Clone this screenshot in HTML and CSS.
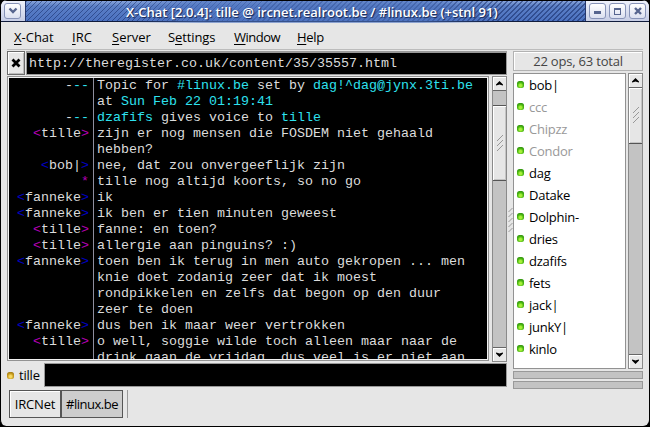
FILE: index.html
```
<!DOCTYPE html>
<html lang="en">
<head>
<meta charset="utf-8">
<title>X-Chat</title>
<link rel="stylesheet" href="styles.css">
</head>
<body>
<div class="window">
  <header class="titlebar">
    <div class="title-end left"><span class="wbtn"><svg width="10" height="10" viewBox="0 0 10 10"><path d="M1.5 2.5L5 6L8.5 2.5" fill="none" stroke="#56658f" stroke-width="2.4"/></svg></span></div>
    <div class="title"><span>X-Chat [2.0.4]: tille @ ircnet.realroot.be / #linux.be (+stnl 91)</span></div>
    <div class="title-end right">
      <span class="wbtn"><svg width="10" height="10" viewBox="0 0 10 10"><path d="M1 5h7v3H1z" fill="#56658f"/></svg></span>
      <span class="wbtn"><svg width="9" height="9" viewBox="0 0 9 9"><path d="M1 1h7v7H1zM2 3v4h5V3z" fill="#56658f" fill-rule="evenodd"/></svg></span>
      <span class="wbtn"><svg width="10" height="10" viewBox="0 0 10 10"><path d="M2 2l6 6M8 2L2 8" stroke="#56658f" stroke-width="2.4"/></svg></span>
    </div>
  </header>
  <nav class="menu">
    <span class="m1"><u>X</u>-Chat</span><span class="m2"><u>I</u>RC</span><span class="m3"><u>S</u>erver</span><span class="m4">S<u>e</u>ttings</span><span class="m5"><u>W</u>indow</span><span class="m6"><u>H</u>elp</span>
  </nav>
  <main class="body">
    <section class="chat">
      <div class="topic">
        <button class="close"><svg width="10" height="10" viewBox="0 0 10 10"><path d="M1.5 1.5l7 7M8.5 1.5L1.5 8.5" stroke="#000" stroke-width="2.8"/></svg></button>
        <div class="entry mono">http://theregister.co.uk/content/35/35557.html</div>
      </div>
      <div class="logrow">
        <div class="log mono">
          <div class="nicks"><div>-<i class="c">--</i></div><div>&nbsp;</div><div>-<i class="c">--</i></div><div><i class="p">&lt;</i>tille<i class="p">&gt;</i></div><div>&nbsp;</div><div><i class="b">&lt;</i>bob|<i class="b">&gt;</i></div><div><i class="p">*</i></div><div><i class="b">&lt;</i>fanneke<i class="b">&gt;</i></div><div><i class="b">&lt;</i>fanneke<i class="b">&gt;</i></div><div><i class="p">&lt;</i>tille<i class="p">&gt;</i></div><div><i class="p">&lt;</i>tille<i class="p">&gt;</i></div><div><i class="b">&lt;</i>fanneke<i class="b">&gt;</i></div><div>&nbsp;</div><div>&nbsp;</div><div>&nbsp;</div><div><i class="b">&lt;</i>fanneke<i class="b">&gt;</i></div><div><i class="p">&lt;</i>tille<i class="p">&gt;</i></div></div>
          <div class="lines"><div>Topic for <i class="c">#linux.be</i> set by <i class="c">dag!^dag@jynx.3ti.be</i></div><div>at <i class="c">Sun Feb 22 01:19:41</i></div><div><i class="c">dzafifs</i> gives voice to <i class="c">tille</i></div><div>zijn er nog mensen die FOSDEM niet gehaald</div><div>hebben?</div><div>nee, dat zou onvergeeflijk zijn</div><div>tille nog altijd koorts, so no go</div><div>ik</div><div>ik ben er tien minuten geweest</div><div>fanne: en toen?</div><div>allergie aan pinguins? :)</div><div>toen ben ik terug in men auto gekropen ... men</div><div>knie doet zodanig zeer dat ik moest</div><div>rondpikkelen en zelfs dat begon op den duur</div><div>zeer te doen</div><div>dus ben ik maar weer vertrokken</div><div>o well, soggie wilde toch alleen maar naar de</div><div>drink gaan de vrijdag, dus veel is er niet aan</div></div>
        </div>
        <div class="scroll">
          <span class="arrow"><svg width="7" height="5" viewBox="0 0 7 5"><path d="M3.5 0L7 3.5V4.5L5 4L3.5 3.5L2 4L0 4.5V3.5z"/></svg></span>
          <span class="track t1"></span>
          <span class="thumb h1"><svg width="8" height="17" viewBox="0 0 8 17"><path d="M1 6L7 0M1 11L7 5M1 16L7 10" stroke="#999"/></svg></span>
          <span class="track grow"></span>
          <span class="arrow down"><svg width="7" height="5" viewBox="0 0 7 5"><path d="M3.5 0L7 3.5V4.5L5 4L3.5 3.5L2 4L0 4.5V3.5z"/></svg></span>
        </div>
      </div>
      <div class="inputrow"><span class="dot gold"></span><span class="me">tille</span><div class="input"></div></div>
    </section>
    <div class="handle"><svg width="5" height="26" viewBox="0 0 5 26"><path d="M0.5 5L4.5 1M0.5 10L4.5 6M0.5 15L4.5 11M0.5 20L4.5 16M0.5 25L4.5 21" stroke="#999"/></svg></div>
    <aside class="side">
      <div class="count"><span>22 ops, 63 total</span></div>
      <div class="userrow">
        <ul class="users">
          <li><span class="dot"></span>bob|</li><li class="away"><span class="dot"></span>ccc</li><li class="away"><span class="dot"></span>Chipzz</li><li class="away"><span class="dot"></span>Condor</li><li><span class="dot"></span>dag</li><li><span class="dot"></span>Datake</li><li><span class="dot"></span>Dolphin-</li><li><span class="dot"></span>dries</li><li><span class="dot"></span>dzafifs</li><li><span class="dot"></span>fets</li><li><span class="dot"></span>jack|</li><li><span class="dot"></span>junkY|</li><li><span class="dot"></span>kinlo</li>
        </ul>
        <div class="scroll">
          <span class="arrow"><svg width="7" height="5" viewBox="0 0 7 5"><path d="M3.5 0L7 3.5V4.5L5 4L3.5 3.5L2 4L0 4.5V3.5z"/></svg></span>
          <span class="thumb h2"><svg width="8" height="17" viewBox="0 0 8 17"><path d="M1 6L7 0M1 11L7 5M1 16L7 10" stroke="#999"/></svg></span>
          <span class="track grow"></span>
          <span class="arrow down"><svg width="7" height="5" viewBox="0 0 7 5"><path d="M3.5 0L7 3.5V4.5L5 4L3.5 3.5L2 4L0 4.5V3.5z"/></svg></span>
        </div>
      </div>
      <div class="meter"></div>
      <div class="meter"></div>
    </aside>
  </main>
  <footer class="tabs"><span class="tab tab1">IRCNet</span><span class="tab tab2">#linux.be</span><span class="sep"></span></footer>
</div>
</body>
</html>
```
FILE: styles.css
```
* { box-sizing: border-box; }
body { margin: 0; background: #000; overflow: hidden; font: 13px/16px "Open Sans", "Noto Sans", sans-serif; color: #000; }
.window { width: 649px; height: 426px; border-left: 1px solid #000; border-radius: 7px 7px 6px 6px; background: #e6e6e6; overflow: hidden; display: flex; flex-direction: column; }
.titlebar { height: 22px; display: flex; flex: none; border-top: 1px solid #000; border-bottom: 1px solid #111c3c; background: #d2d8ec; }
.title-end { display: flex; background: linear-gradient(#eef1fb, #c6cde5); align-items: center; }
.left { width: 25px; padding-left: 3px; border-right: 1px solid #24366d; }
.right { width: 64px; gap: 3px; padding-left: 3px; border-left: 1px solid #24366d; }
.wbtn { width: 17px; height: 16px; border: 1px solid #8793b8; border-radius: 3px; background: linear-gradient(#fff, #dbe0f0); display: flex; align-items: center; justify-content: center; flex: none; }
.title { flex: 1; background: repeating-linear-gradient(135deg, rgba(16,36,96,.5) 0 1.2px, transparent 1.2px 3.54px), linear-gradient(#88a5dc 0, #5b7fc6 25%, #4c72c0 100%); color: #fff; font-weight: 600; line-height: 22px; padding-left: 100px; white-space: nowrap; text-shadow: 1px 1px 1px #14234e; }
.title span { display: block; width: 371px; letter-spacing: -.02px; background: linear-gradient(90deg, transparent, rgba(78,116,192,.6) 20% 80%, transparent); }
.menu { display: flex; height: 28px; padding: 6px 0 0 7px; line-height: 18px; margin: 0 6px; border-bottom: 1px solid #bcbcbc; flex: none; }
.menu span { white-space: nowrap; }
.menu u { text-underline-offset: 2px; }
.m1 { width: 58px; } .m2 { width: 40px; } .m3 { width: 56px; } .m4 { width: 66px; letter-spacing: -.1px; } .m5 { width: 63px; letter-spacing: -.5px; } .m6 { letter-spacing: -.3px; }
.body { display: flex; height: 339px; flex: none; padding: 1px 6px 0 6px; }
.chat { width: 500px; display: flex; flex-direction: column; }
.mono { font-family: "Liberation Mono", monospace; font-size: 13.333px; line-height: 16px; color: #dcdcdc; white-space: pre; }
.topic { display: flex; height: 24px; }
.close { width: 18px; padding: 0; border: 1px solid #6b6b6b; box-shadow: inset 1px 1px #fff, inset -1px -1px #bbb; background: #e6e6e6; display: flex; align-items: center; justify-content: center; }
.entry { flex: 1; background: #000; border: 1px solid #999; border-top-width: 2px; padding: 2px 0 0 2px; margin-left: 1px; line-height: 18px; }
.logrow { display: flex; height: 286px; margin-top: 1px; justify-content: space-between; }
.log { width: 482px; border: 1px solid #929292; background: #000; outline: 1px solid #f2f2f2; outline-offset: -2px; padding: 1px; display: flex; overflow: hidden; height: 285px; }
.log i { font-style: normal; }
.nicks { width: 85px; text-align: right; padding-right: 4px; border-right: 1px solid #8e8e9e; flex: none; }
.lines { padding-left: 3px; height: 281px; overflow: hidden; }
.c { color: #2ee2ef; } .p { color: #b400b4; } .b { color: #0000c4; }
.scroll { width: 15px; display: flex; flex-direction: column; border: 1px solid #8a8a8a; }
.arrow { height: 14px; background: #e8e8e8; box-shadow: inset 1px 1px #fff; border-bottom: 1px solid #666; display: flex; align-items: center; justify-content: center; flex: none; }
.arrow.down { border-bottom: 0; border-top: 1px solid #666; }
.down svg { transform: rotate(180deg); }
.track { background: #c3c3c3; }
.grow { flex: 1; }
.t1 { height: 14px; }
.thumb { background: #e6e6e6; box-shadow: inset 1px 1px #fff, inset -1px -1px #c4c4c4; border-bottom: 1px solid #555; display: flex; align-items: center; justify-content: center; flex: none; }
.h1 { height: 76px; border-top: 1px solid #555; }
.h2 { height: 56px; }
.inputrow { display: flex; height: 24px; margin-top: 1px; align-items: center; }
.dot { width: 7px; height: 7px; border-radius: 2.5px; flex: none; background: radial-gradient(circle at 50% 65%, #a6f03a 0 20%, #4cb813 50%, #1f7a0c 100%); }
.gold { background: radial-gradient(circle at 50% 65%, #f5d860 0 20%, #c89c20 50%, #876408 100%); }
.me { width: 25px; margin-left: 5px; letter-spacing: -.2px; }
.input { flex: 1; height: 24px; background: #000; border: 1px solid #999; }
.handle { width: 6px; display: flex; align-items: center; justify-content: center; }
.side { width: 130px; }
.count { height: 20px; border: 1px solid #b2b2b2; box-shadow: inset 1px 1px #fff; color: #444; text-align: center; line-height: 19px; letter-spacing: -.2px; }
.userrow { display: flex; height: 296px; margin-top: 2px; justify-content: space-between; }
.users { width: 113px; margin: 0; padding: 0 0 0 3px; list-style: none; background: #fff; border: 1px solid #929292; overflow: hidden; }
.users li { height: 22px; display: flex; align-items: center; gap: 5px; letter-spacing: -.25px; }
.users .dot { margin-top: -1px; }
.away { color: #999; }
.meter { height: 8px; margin-top: 2px; background: #c3c3c3; border: 1px solid #999; }
.tabs { display: flex; padding: 1px 0 0 8px; height: 30px; }
.tab { height: 28px; border: 1px solid #555; box-shadow: inset 1px 1px #fff; display: flex; align-items: center; justify-content: center; white-space: nowrap; letter-spacing: -.2px; }
.tab1 { width: 52px; } .tab2 { width: 62px; background: #cdcdcd; box-shadow: none; letter-spacing: -.5px; }
.sep { border-left: 1px solid #999; margin-left: 4px; height: 28px; }
```
